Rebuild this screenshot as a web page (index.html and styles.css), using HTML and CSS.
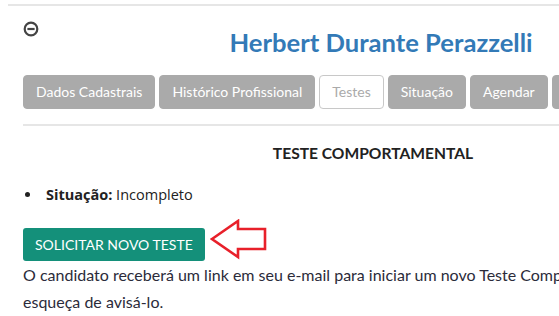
FILE: index.html
```html
<!DOCTYPE html>
<html lang="pt-BR">
<head>
  <meta charset="UTF-8" />
  <title>Testes</title>
  <link rel="stylesheet" href="styles.css">
</head>
<body>
  <div class="top-rule"></div>
  <div class="page">
    <div class="header">
      <span class="collapse-icon">
        <svg width="16" height="16" viewBox="0 0 16 16">
          <circle cx="8" cy="8" r="6.3" fill="none" stroke="#444" stroke-width="2.2"/>
          <rect x="4.4" y="6.9" width="7.2" height="2.2" fill="#444"/>
        </svg>
      </span>
      <h2>Herbert Durante Perazzelli</h2>
    </div>

    <ul class="tabs">
      <li class="tab">Dados Cadastrais</li>
      <li class="tab">Histórico Profissional</li>
      <li class="tab active">Testes</li>
      <li class="tab">Situação</li>
      <li class="tab">Agendar</li>
      <li class="tab">Documentos</li>
    </ul>

    <div class="section">
      <h4>TESTE COMPORTAMENTAL</h4>
      <ul class="status-list">
        <li><span><strong>Situação:</strong> Incompleto</span></li>
      </ul>

      <div class="action">
        <button type="button" class="btn-new">SOLICITAR NOVO TESTE</button>
        <svg class="arrow" width="58" height="42" viewBox="0 0 58 42">
          <polygon points="2,20 28,2 28,10 55,10 55,30 28,30 28,38" fill="none" stroke="#e8202a" stroke-width="2.6" stroke-linejoin="miter"/>
        </svg>
      </div>
      <p class="note">O candidato receberá um link em seu e-mail para iniciar um novo Teste Comportamental. Não esqueça de avisá-lo.</p>
    </div>
  </div>
</body>
</html>
```

FILE: styles.css
```css
*, *::before, *::after {
  box-sizing: border-box;
}

body {
  margin: 0;
  padding: 0 0 0 8px;
  font-family: Lato, sans-serif;
  color: #333;
  background: #fff;
  overflow: hidden;
}

.top-rule {
  height: 2px;
  margin-top: 4px;
  background: #e6e6e6;
  width: 760px;
}

.page {
  width: 715px;
  padding: 0 0 0 15px;
}

.header {
  position: relative;
  height: 69px;
}

.collapse-icon {
  position: absolute;
  left: 0;
  top: 15px;
}

.header h2 {
  margin: 0;
  padding-top: 21px;
  padding-left: 16px;
  text-align: center;
  font-size: 25.6px;
  font-weight: 700;
  color: #337ab7;
}

.tabs {
  list-style: none;
  margin: 0;
  padding: 0 0 15px;
  display: flex;
  gap: 4px;
  border-bottom: 2px solid #e6e6e6;
  width: 760px;
}

.tab {
  background: #aaa;
  color: #fff;
  font-size: 14px;
  height: 34px;
  line-height: 32px;
  padding: 0 12px;
  border-radius: 4px;
  white-space: nowrap;
  border: 1px solid #aaa;
}

.tab.active {
  background: #fff;
  color: #aaa;
  border-color: #c8c8c8;
}

.section h4 {
  margin: 18px 0 0;
  text-align: center;
  font-size: 15.6px;
  font-weight: 700;
  color: #222;
}

.status-list {
  list-style: none;
  margin: 23px 0 0;
  padding: 0;
  font-family: "Open Sans", sans-serif;
  font-size: 14.5px;
  color: #222;
}

.status-list li {
  display: flex;
  align-items: center;
  gap: 16px;
}

.status-list li::before {
  content: "";
  width: 5px;
  height: 5px;
  margin-left: 2px;
  border-radius: 50%;
  background: #222;
}

.status-list strong {
  font-weight: 700;
}

.action {
  display: flex;
  align-items: center;
  margin-top: 24px;
}

.btn-new {
  background: #14907a;
  color: #fff;
  border: none;
  border-radius: 3px;
  font-family: Lato, sans-serif;
  font-size: 14px;
  height: 33px;
  padding: 0 12px;
  cursor: pointer;
}

.arrow {
  margin-left: 5px;
  margin-top: -9px;
}

.note {
  margin: 0;
  width: 700px;
  font-size: 16px;
  line-height: 27px;
  color: #2b2b3a;
}
```
